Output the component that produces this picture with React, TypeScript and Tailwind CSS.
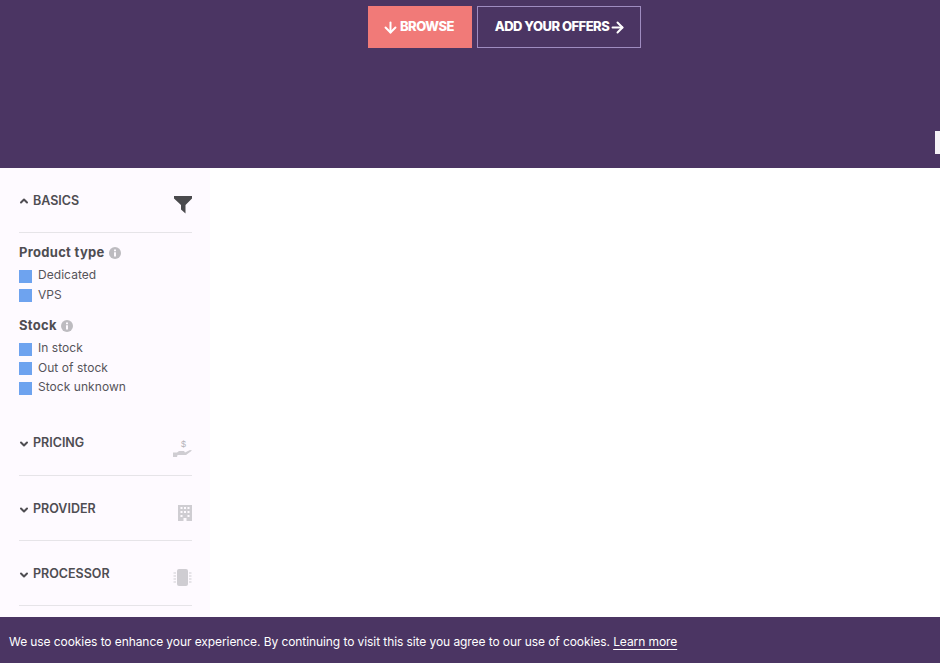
import { ArrowDown, ArrowRight, ChevronDown, ChevronUp } from "lucide-react";
import type { ReactNode } from "react";

const FilterIcon = () => (
  <svg width="18" height="20" viewBox="0 0 18 20" className="text-[#4a4a4d]">
    <path d="M0 1h18v2.500L11.500 10v8.500L7 14.500V10L0 3.500z" fill="currentColor" />
  </svg>
);

const PricingIcon = () => (
  <svg width="19" height="20" viewBox="0 0 19 20" className="text-[#cfcdd2]">
    <path d="M0 14.500h4l2-1.500h5l1 1.500 5-2.500 2 .5-6 4.500H4.500l-.5 2H0z" fill="currentColor" />
    <text x="10.500" y="9" fontSize="9" textAnchor="middle" fill="#b5b3b8" fontFamily="Liberation Sans, sans-serif">$</text>
  </svg>
);

const BuildingIcon = () => (
  <svg width="14" height="20" viewBox="0 0 14 20" className="text-[#cfcdd2]">
    <path
      fillRule="evenodd"
      d="M0 2h14v16H8.500v-3h-3v3H0zM2.500 4v2h2V4zM6 4v2h2V4zM9.500 4v2h2V4zM2.500 8v2h2V8zM6 8v2h2V8zM9.500 8v2h2V8zM2.500 12v2h2v-2zM9.500 12v2h2v-2z"
      fill="currentColor"
    />
  </svg>
);

const ChipIcon = () => (
  <svg width="19" height="20" viewBox="0 0 19 20" className="text-[#cfcdd2]">
    <rect x="4" y="1" width="11" height="17" rx="2" fill="currentColor" />
    <path d="M0.500 5h2.500M0.500 8h2.500M0.500 11h2.500M0.500 14h2.500M16 5h2.500M16 8h2.500M16 11h2.500M16 14h2.500" stroke="currentColor" strokeWidth="1" />
  </svg>
);

const InfoDot = () => (
  <svg width="12" height="12" viewBox="0 0 12 12" className="text-[#bdbbc0]">
    <circle cx="6" cy="6" r="6" fill="currentColor" />
    <path d="M5 2.500h2v1.700H5zM5 5.200h2v4.300H5z" fill="#fefaff" />
  </svg>
);

const FilterRow = ({ label }: { label: string }) => (
  <label className="flex items-center gap-[6px] h-[19.500px] text-[12px] text-[#56545a] tracking-[0.05px]">
    <span className="w-[13px] h-[13px] mt-[2px] bg-[#6ea3ef] shrink-0" />
    {label}
  </label>
);

const FilterGroup = ({ title, options }: { title: string; options: string[] }) => (
  <div className="mb-[11.500px]">
    <div className="flex items-center gap-[4px] h-[20px] mb-[2.500px] text-[13px] font-bold text-[#4f4d52] tracking-[0.3px]">
      {title}
      <InfoDot />
    </div>
    {options.map((o) => (
      <FilterRow key={o} label={o} />
    ))}
  </div>
);

const Section = ({
  title,
  open,
  low,
  icon,
  children,
}: {
  title: string;
  open?: boolean;
  low?: boolean;
  icon: ReactNode;
  children?: ReactNode;
}) => (
  <section className={open ? "" : "mb-[16px]"}>
    <div className="flex justify-between border-b border-[#e6e4e8] h-[49px]">
      <div
        className={
          low
            ? "flex items-center gap-[3px] -ml-px h-[20px] mt-[8px] text-[12.500px] font-semibold text-[#4f4d52]"
            : "flex items-center gap-[3px] -ml-px h-[20px] mt-[7px] text-[12.500px] font-semibold text-[#4f4d52]"
        }
      >
        {open ? <ChevronUp size={12} strokeWidth={4} /> : <ChevronDown size={12} strokeWidth={4} />}
        {title}
      </div>
      <div className="flex items-start justify-end pt-[11px] w-[24px]">{icon}</div>
    </div>
    {children}
  </section>
);

const App = () => {
  return (
    <div className="relative h-screen overflow-hidden bg-white font-['Inter',sans-serif]">
      <header className="relative h-[168px] bg-[#4b3563] pt-[6px]">
        <div className="flex justify-center gap-[5px] pl-[69px]">
          <a className="flex items-center justify-center w-[104px] h-[42px] pr-[4px] bg-[#f17a78] text-white text-[13px] font-extrabold tracking-[-0.5px]">
            <ArrowDown size={17} strokeWidth={2.800} className="mr-px" />
            BROWSE
          </a>
          <a className="flex items-center justify-center w-[164px] h-[42px] pl-[3px] border border-[#9f8cc0] text-white text-[13px] font-extrabold tracking-[-0.5px]">
            ADD YOUR OFFERS
            <ArrowRight size={17} strokeWidth={2.800} />
          </a>
        </div>
        <div className="absolute right-0 top-[131px] w-[5px] h-[23px] bg-[#f5f1f6]" />
      </header>

      <aside className="w-[210px] h-[480px] bg-[#fefaff] pl-[19px] pr-[18px] pt-[16px]">
        <Section title="BASICS" open icon={<FilterIcon />}>
          <div className="pt-[10px] pb-[5px]">
            <FilterGroup title="Product type" options={["Dedicated", "VPS"]} />
            <FilterGroup title="Stock" options={["In stock", "Out of stock", "Stock unknown"]} />
          </div>
        </Section>
        <div className="pt-[13px]">
          <Section title="PRICING" icon={<PricingIcon />} />
        </div>
        <Section title="PROVIDER" low icon={<BuildingIcon />} />
        <Section title="PROCESSOR" low icon={<ChipIcon />} />
      </aside>

      <div className="fixed left-0 right-0 bottom-px h-[46px] flex items-center bg-[#4b3563] pl-[9px] pt-[3px] text-[12px] text-white tracking-[-0.08px]">
        <span>
          We use cookies to enhance your experience. By continuing to visit this site you agree to our use of cookies.{" "}
          <a className="underline underline-offset-3">Learn more</a>
        </span>
      </div>
    </div>
  );
};

export default App;
